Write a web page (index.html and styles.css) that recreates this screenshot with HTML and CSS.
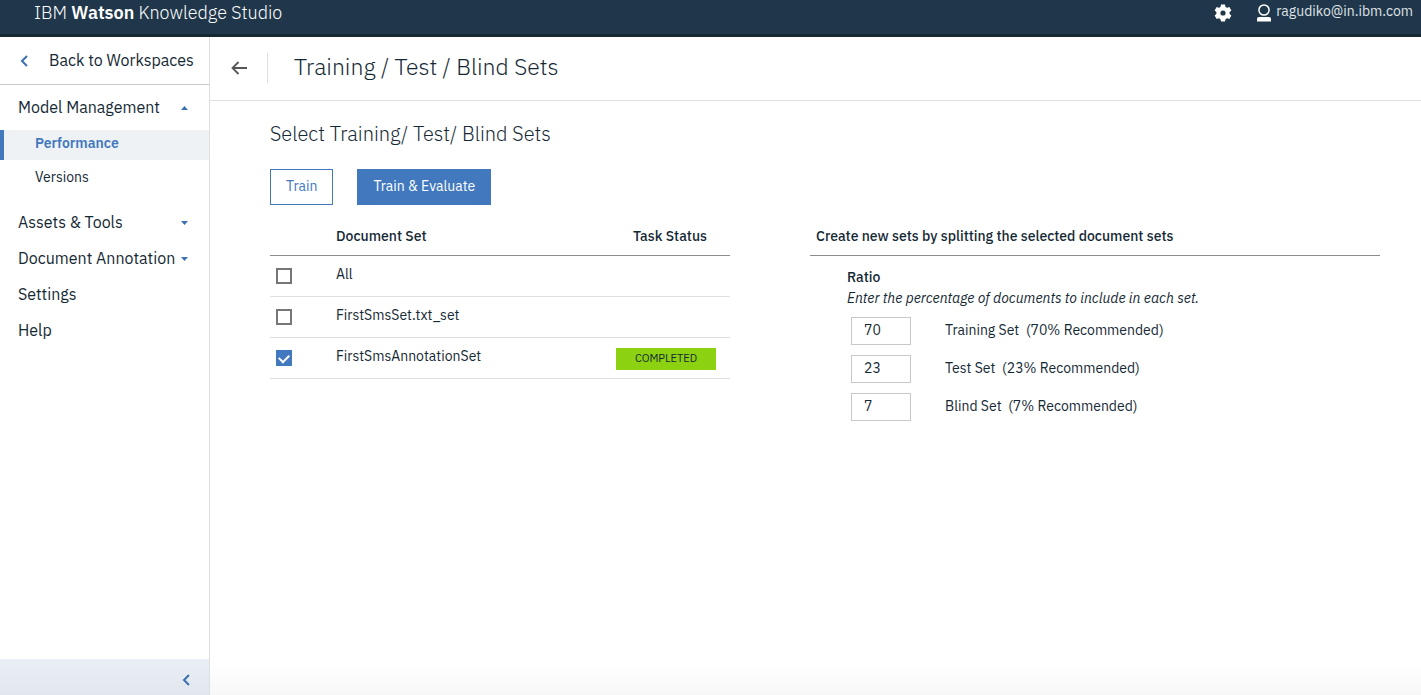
FILE: index.html
```html
<!DOCTYPE html>
<html lang="en">
<head>
<meta charset="utf-8">
<title>IBM Watson Knowledge Studio</title>
<link rel="stylesheet" href="styles.css">
</head>
<body>
<header class="topbar">
  <a class="brand" href="#">IBM <strong>Watson</strong> Knowledge Studio</a>
  <div class="account">
    <button class="icon-button" type="button" aria-label="Settings">
      <svg width="20" height="20" viewBox="0 0 20 20" fill="#fff"><circle cx="10" cy="10" r="4.600" fill="none" stroke="#fff" stroke-width="4"/><path id="tooth" d="M8 1.500h4l.6 3H7.400zM8 18.500h4l.6-3H7.400z"/><use href="#tooth" transform="rotate(60 10 10)"/><use href="#tooth" transform="rotate(120 10 10)"/></svg>
    </button>
    <a class="user" href="#">
      <svg width="14" height="18" viewBox="0 0 14 18"><circle cx="7" cy="6" r="5.100" fill="none" stroke="#fff" stroke-width="1.500"/><path d="M0 17.500v-2.500q0-2 2-2h10q2 0 2 2v2.500z" fill="#fff"/></svg>
      <span>ragudiko@in.ibm.com</span>
    </a>
  </div>
</header>
<div class="layout">
  <aside class="sidebar">
    <a class="back" href="#">
      <svg width="8" height="12" viewBox="0 0 8 12"><path d="M7 1 2 6l5 5" fill="none" stroke="#3d70b2" stroke-width="2"/></svg>
      <span>Back to Workspaces</span>
    </a>
    <nav class="nav">
      <button class="nav-item" type="button" aria-expanded="true"><span>Model Management</span><svg width="7" height="4" viewBox="0 0 7 4"><path d="M0 4 3.500 0 7 4z" fill="#3d70b2"/></svg></button>
      <div class="subnav">
        <a class="subnav-item active" href="#">Performance</a>
        <a class="subnav-item" href="#">Versions</a>
      </div>
      <button class="nav-item" type="button" aria-expanded="false"><span>Assets &amp; Tools</span><svg width="7" height="4" viewBox="0 0 7 4"><path d="M0 0h7L3.500 4z" fill="#3d70b2"/></svg></button>
      <button class="nav-item" type="button" aria-expanded="false"><span>Document Annotation</span><svg width="7" height="4" viewBox="0 0 7 4"><path d="M0 0h7L3.500 4z" fill="#3d70b2"/></svg></button>
      <a class="nav-item" href="#"><span>Settings</span></a>
      <a class="nav-item" href="#"><span>Help</span></a>
    </nav>
    <button class="collapse" type="button" aria-label="Collapse sidebar"><svg width="8" height="12" viewBox="0 0 8 12"><path d="M7 1 2 6l5 5" fill="none" stroke="#3d70b2" stroke-width="2"/></svg></button>
  </aside>
  <main class="main">
    <div class="page-head">
      <button class="icon-button go-back" type="button" aria-label="Go back"><svg width="16" height="14" viewBox="0 0 16 14"><path d="M16 7H1.500M7.500 1 1.500 7l6 6" fill="none" stroke="#565656" stroke-width="1.800"/></svg></button>
      <h1 class="page-title">Training / Test / Blind Sets</h1>
    </div>
    <div class="content">
      <h2 class="section-title">Select Training/ Test/ Blind Sets</h2>
      <div class="actions">
        <button class="btn" type="button">Train</button>
        <button class="btn btn-primary" type="button">Train &amp; Evaluate</button>
      </div>
      <div class="columns">
        <table class="sets">
          <thead>
            <tr><th class="col-check"></th><th class="col-name">Document Set</th><th class="col-status">Task Status</th></tr>
          </thead>
          <tbody>
            <tr><td><input class="check" type="checkbox" id="set-all"></td><td class="name"><label for="set-all">All</label></td><td></td></tr>
            <tr><td><input class="check" type="checkbox" id="set-sms"></td><td class="name"><label for="set-sms">FirstSmsSet.txt_set</label></td><td></td></tr>
            <tr><td><input class="check" type="checkbox" id="set-ann" checked></td><td class="name"><label for="set-ann">FirstSmsAnnotationSet</label></td><td class="status"><span class="badge">COMPLETED</span></td></tr>
          </tbody>
        </table>
        <section class="split">
          <h3 class="split-title">Create new sets by splitting the selected document sets</h3>
          <div class="ratio">
            <h4 class="ratio-title">Ratio</h4>
            <p class="hint">Enter the percentage of documents to include in each set.</p>
            <div class="field"><input class="num" type="text" id="r-train" value="70"><label for="r-train">Training Set&nbsp; (70% Recommended)</label></div>
            <div class="field"><input class="num" type="text" id="r-test" value="23"><label for="r-test">Test Set&nbsp; (23% Recommended)</label></div>
            <div class="field"><input class="num" type="text" id="r-blind" value="7"><label for="r-blind">Blind Set&nbsp; (7% Recommended)</label></div>
          </div>
        </section>
      </div>
    </div>
  </main>
</div>
</body>
</html>
```
FILE: styles.css
```css
* { box-sizing: border-box; }
body {
  margin: 0;
  min-height: 100vh;
  display: flex;
  flex-direction: column;
  font-family: "IBM Plex Sans", Roboto, "Liberation Sans", sans-serif;
  font-size: 14px;
  line-height: 20px;
  color: #152935;
  background: #fff;
}
a { color: inherit; text-decoration: none; }
button, input { font: inherit; color: inherit; }
button { padding: 0; border: 0; background: none; cursor: pointer; }
svg { display: block; flex: none; }
h1, h2, h3, h4, p { margin: 0; }

.topbar {
  display: flex;
  justify-content: space-between;
  align-items: flex-start;
  height: 37px;
  padding: 0 8px 0 34px;
  background: #20374b;
  border-bottom: 3px solid #152935;
  color: #fff;
}
.brand { font-size: 18px; line-height: 26px; font-weight: 300; }
.brand strong { font-weight: 600; }
.account { display: flex; align-items: center; gap: 24px; padding-top: 1px; }
.user { display: flex; align-items: center; gap: 5px; color: #dfe3e6; }
.user span { padding-bottom: 3px; }

.layout { flex: 1; display: flex; }
.sidebar {
  flex: none;
  width: 210px;
  display: flex;
  flex-direction: column;
  border-right: 1px solid #dfdfdf;
}
.back {
  display: flex;
  align-items: center;
  gap: 21px;
  height: 48px;
  padding-left: 20px;
  border-bottom: 1px solid #c8c8c8;
  font-size: 16px;
}
.back span, .nav-item span { padding-bottom: 2px; }
.nav { flex: 1; padding-top: 5px; }
.nav-item {
  display: flex;
  align-items: center;
  justify-content: space-between;
  width: 100%;
  height: 36px;
  padding: 0 21px 0 18px;
  font-size: 16px;
}
.subnav { display: grid; gap: 4px; padding: 4px 0 11px; }
.subnav-item { height: 30px; padding: 3px 0 0 31px; border-left: 4px solid transparent; }
.subnav-item.active {
  border-color: #4178be;
  background: #eff2f5;
  color: #4178be;
  font-weight: 600;
}
.collapse {
  display: flex;
  align-items: center;
  justify-content: flex-end;
  height: 36px;
  padding: 6px 19px 0 0;
  background: linear-gradient(#eaeef5, #e2e6ed);
}

.main { flex: 1; background: linear-gradient(transparent calc(100% - 30px), #f7f7f7); }
.page-head {
  display: flex;
  align-items: center;
  height: 64px;
  padding: 0 0 2px 21px;
  border-bottom: 1px solid #dfdfdf;
}
.page-title {
  margin-left: 20px;
  padding: 0 0 4px 26px;
  border-left: 1px solid #dfdfdf;
  font-size: 23px;
  line-height: 26px;
  font-weight: 300;
}
.content { padding: 20px 41px 20px 60px; }
.section-title { font-size: 20px; line-height: 26px; font-weight: 300; }
.actions { display: flex; gap: 24px; margin-top: 22px; }
.btn {
  height: 36px;
  padding: 0 15px 2px;
  border: 1px solid #4178be;
  background: #fff;
  color: #4178be;
}
.btn-primary { background: #4178be; color: #fff; }

.columns {
  display: grid;
  grid-template-columns: 460fr 570fr;
  gap: 80px;
  align-items: start;
  margin-top: 12px;
}
.sets { width: 100%; border-collapse: separate; border-spacing: 0; table-layout: fixed; }
.sets th {
  height: 39px;
  padding: 0 0 1px;
  border-bottom: 1px solid #8c8c8c;
  text-align: left;
  font-weight: 500;
}
.sets .col-check { width: 66px; }
.sets .col-status { width: 114px; padding-left: 17px; }
.sets td { height: 41px; padding: 0; border-bottom: 1px solid #dfdfdf; }
.sets .name { padding-bottom: 4px; }
.sets .status { padding-top: 2px; }
.check {
  appearance: none;
  display: grid;
  justify-content: center;
  width: 16px;
  height: 16px;
  margin: 0 0 0 6px;
  border: 2px solid #777;
  background: #fff;
}
.check:checked { border-color: #4178be; background: #4178be; }
.check:checked::after {
  content: "";
  width: 8px;
  height: 5px;
  margin-top: 2px;
  border: solid #fff;
  border-width: 0 0 2px 2px;
  transform: rotate(-45deg);
}
.badge {
  display: block;
  width: 100px;
  background: #8cd211;
  font-size: 11px;
  line-height: 20px;
  padding-bottom: 2px;
  text-align: center;
}

.split-title {
  height: 39px;
  padding: 9px 6px 0;
  border-bottom: 1px solid #8c8c8c;
  font-size: 14px;
  font-weight: 500;
}
.ratio { padding: 11px 0 0 37px; }
.ratio-title { font-size: 14px; font-weight: 500; }
.hint { padding-top: 1px; font-style: italic; }
.field { display: flex; align-items: center; gap: 34px; margin: 10px 0 0 4px; }
.hint + .field { margin-top: 9px; }
.field label { padding-bottom: 2px; }
.num {
  width: 60px;
  height: 28px;
  padding: 0 12px 2px;
  border: 1px solid #c8c8c8;
  background: #fff;
}
```
